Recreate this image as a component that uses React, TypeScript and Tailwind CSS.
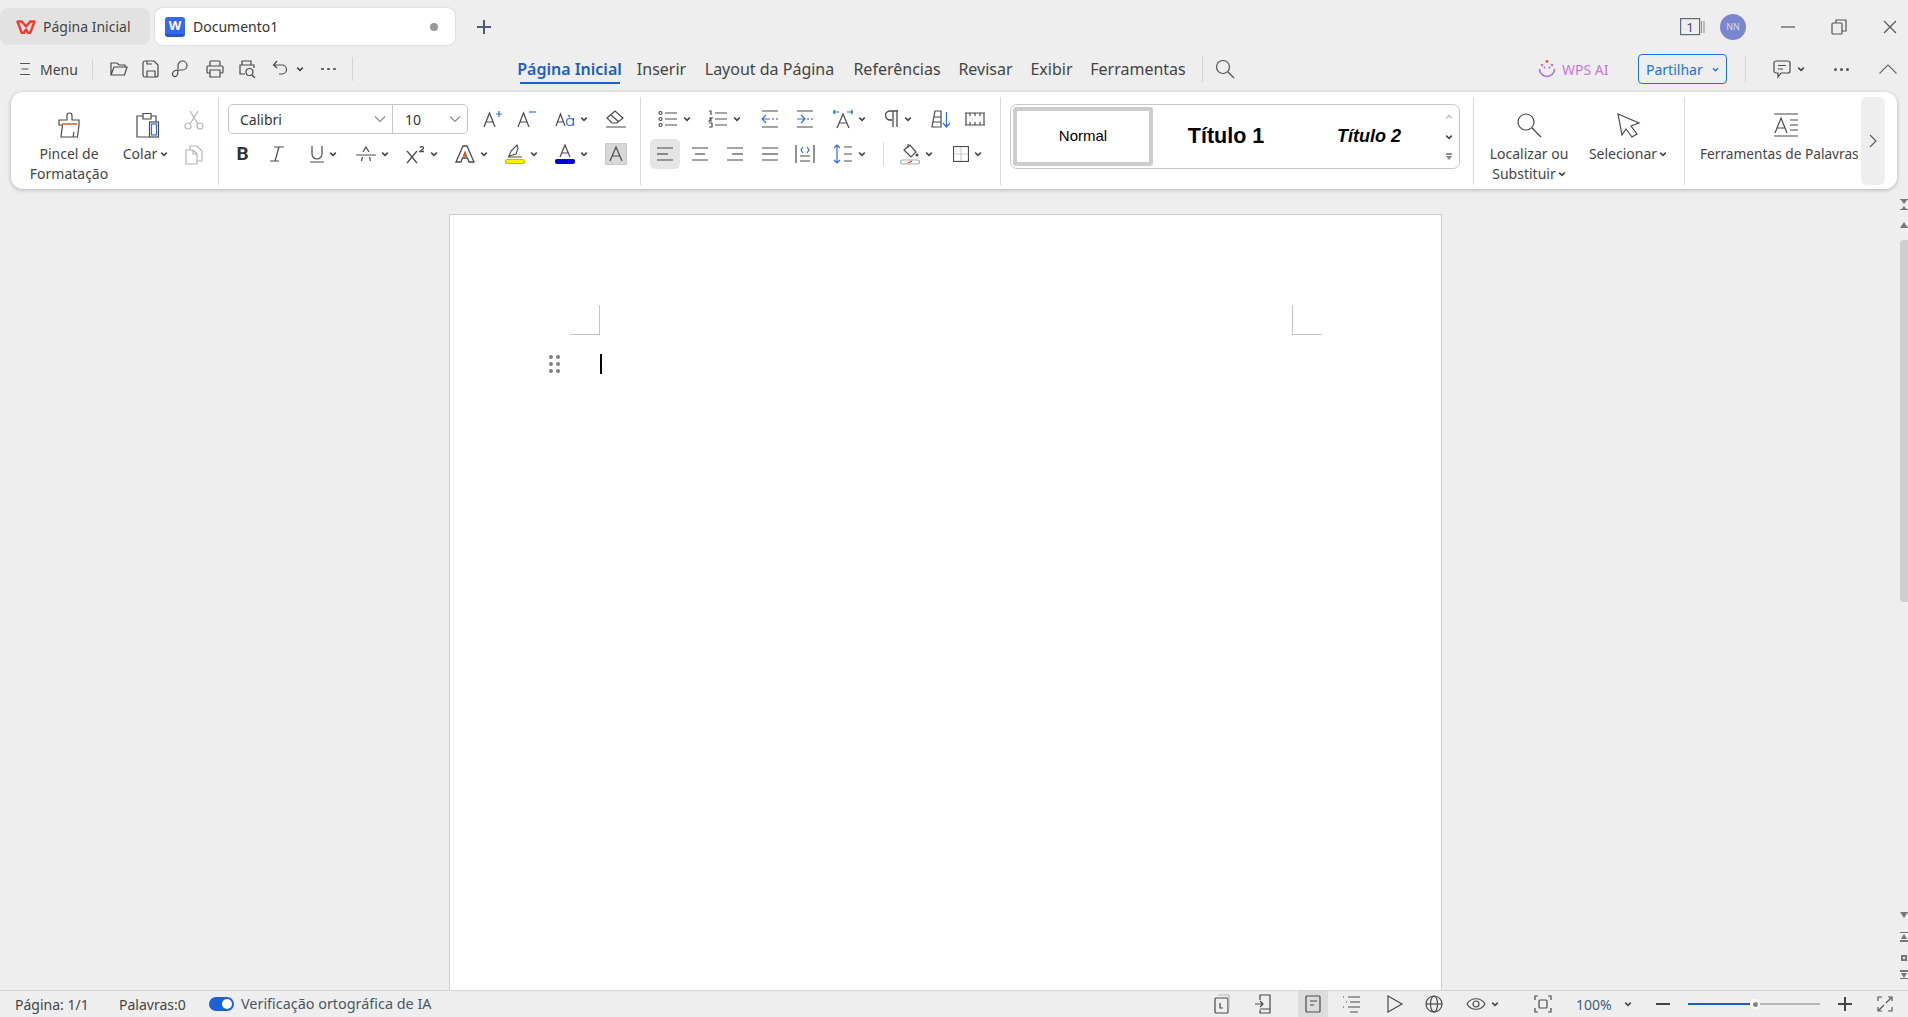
import type { ReactNode } from "react";

const ink = "#4a4a4a";
const blue = "#2f6de8";

function Ico({ size = 20, h, children }: { size?: number; h?: number; children: ReactNode }) {
  return (
    <svg width={size} height={h ?? size} viewBox={`0 0 ${size} ${h ?? size}`} fill="none" stroke={ink} strokeWidth={1.2} className="shrink-0">
      {children}
    </svg>
  );
}

function Chev({ size = 8, color = "#444" }: { size?: number; color?: string }) {
  return (
    <svg width={size} height={size} viewBox="0 0 8 8" fill="none" stroke={color} strokeWidth={1.5} className="shrink-0">
      <path d="M1.2 2.6 4 5.4l2.8-2.8" />
    </svg>
  );
}

function Thin({ className = "" }: { className?: string }) {
  return (
    <svg width="12" height="12" viewBox="0 0 12 12" fill="none" stroke="#8a8a8a" strokeWidth={1.1} className={`shrink-0 ${className}`}>
      <path d="M1 3.5 6 8.5l5-5" />
    </svg>
  );
}

// one slot of a ribbon row, width fixes where the icon lands
function Btn({ w, chev, children }: { w: string; chev?: boolean; children: ReactNode }) {
  return (
    <div className={`flex h-[30px] shrink-0 items-center justify-center gap-[5px] ${w}`}>
      {children}
      {chev && <Chev />}
    </div>
  );
}

const AlignLines = ({ kind }: { kind: "l" | "c" | "r" | "j" }) => {
  const mid = kind === "l" ? "M2 10h11" : kind === "c" ? "M5 10h10" : kind === "r" ? "M7 10h11" : "M2 10h16";
  return (
    <Ico>
      <path d="M2 4h16M2 16h16" />
      <path d={mid} />
    </Ico>
  );
};

function Tabs() {
  return (
    <div className="flex h-[53px] items-start pt-2">
      <div className="flex h-[37px] w-[150px] items-center gap-[7px] rounded-lg bg-[#e2e2e2] pl-4 text-[14px] text-[#444]">
        <svg width="20" height="14" viewBox="0 0 20 14" fill="none" stroke="#f23a2a" strokeWidth={2.4} strokeLinejoin="round">
          <path d="M1.500 1.500h4.300L10 6.500l4.200-5h4.300L14.300 12.800h-2.200L10 9.500l-2.100 3.300H5.700z" />
        </svg>
        Página Inicial
      </div>
      <div className="ml-[5px] flex h-[37px] w-[300px] items-center rounded-lg bg-white pl-[10px] pr-[17px] text-[14px] text-[#333] shadow-[0_0_2px_rgba(0,0,0,0.2)]">
        <div className="flex h-[20px] w-[20px] items-start justify-center overflow-hidden rounded-[3px] border-b-[3px] border-[#2a55c8] bg-[#3468f0] text-[13px] font-bold leading-[17px] text-white">W</div>
        <span className="ml-[8px]">Documento1</span>
        <span className="ml-auto h-2 w-2 rounded-full bg-[#999]" />
      </div>
      <svg width="16" height="16" viewBox="0 0 16 16" stroke="#4a5a78" strokeWidth={2} className="ml-[21px] mt-[11px]">
        <path d="M8 1v14M1 8h14" />
      </svg>
      <div className="ml-auto flex h-[37px] items-center">
        <svg width="25" height="18" viewBox="0 0 25 18" fill="none" stroke="#5a6a80" strokeWidth={1.2}>
          <rect x=".6" y=".6" width="19" height="16" />
          <path d="M21.500 3v12M24 3v12" stroke="#999" />
          <text x="10" y="13.500" fontSize="12" textAnchor="middle" fill="#445" stroke="none" fontFamily="Roboto">1</text>
        </svg>
        <div className="ml-[15px] flex h-[26px] w-[26px] items-center justify-center rounded-full bg-[#7b86d0] text-[9px] text-[#d9dcf2]">NN</div>
        <svg width="14" height="14" viewBox="0 0 14 14" stroke="#555" strokeWidth={1.2} className="ml-[35px]">
          <path d="M0 7h14" />
        </svg>
        <svg width="16" height="16" viewBox="0 0 16 16" fill="none" stroke="#555" strokeWidth={1.2} className="ml-[36px]">
          <rect x="1" y="4" width="10" height="11" rx="1" />
          <path d="M5 4V1h10v11h-4" />
        </svg>
        <svg width="14" height="14" viewBox="0 0 14 14" stroke="#555" strokeWidth={1.2} className="ml-[36px] mr-[11px]">
          <path d="M1 1l12 12M13 1 1 13" />
        </svg>
      </div>
    </div>
  );
}

function NavItem({ w, active, children }: { w: string; active?: boolean; children: ReactNode }) {
  return (
    <div className={`relative flex h-[30px] shrink-0 items-center justify-center whitespace-nowrap ${w} ${active ? "font-semibold text-[#1a5fc4]" : "text-[#444]"}`}>
      {children}
      {active && <span className="absolute bottom-0 left-[3px] right-[2px] h-[2px] bg-[#1a5fc4]" />}
    </div>
  );
}

function Toolbar() {
  return (
    <div className="flex h-[39px] items-center pb-[7px] text-[16px]">
      <svg width="12" height="14" viewBox="0 0 12 14" stroke="#555" strokeWidth={1.2} className="ml-[19px]">
        <path d="M1 1.500h10M2.500 7h7M1 12.500h10" />
      </svg>
      <span className="ml-[9px] w-[37px] whitespace-nowrap text-[14px] text-[#444]">Menu</span>
      <div className="ml-[15px] h-[20px] w-px bg-[#d4d4d4]" />
      <div className="ml-[16px]">
        <Ico>
          <path d="M2 16V4h6l2 2h6v2M2 16l3-8h13l-2.500 8z" />
        </Ico>
      </div>
      <div className="ml-[12px]">
        <Ico>
          <path d="M4 2h9l4 4v10a2 2 0 0 1-2 2H4a2 2 0 0 1-2-2V4a2 2 0 0 1 2-2zM6 18v-6h8v6M6 2v3h5" />
        </Ico>
      </div>
      <div className="ml-[10px]">
        <Ico>
          <path d="M7 10V6.500a4.500 4.500 0 1 1 4.500 4.500H7.500c-4 0-6 2-6 4.200S4.500 18.500 6 16.500c.8-1 1-3 1-5.500" />
        </Ico>
      </div>
      <div className="ml-[14px]">
        <Ico>
          <path d="M5 7V3a1 1 0 0 1 1-1h8a1 1 0 0 1 1 1v4M5 14H3a1 1 0 0 1-1-1V8a1 1 0 0 1 1-1h14a1 1 0 0 1 1 1v5a1 1 0 0 1-1 1h-2M5 11h10v7H5z" />
        </Ico>
      </div>
      <div className="ml-[12px]">
        <Ico>
          <path d="M5 6V2h9v4M8 15H3V6h14v3" />
          <circle cx="12.500" cy="13" r="3.500" />
          <path d="m15 16 3 3" />
        </Ico>
      </div>
      <div className="ml-[14px]">
        <Ico>
          <path d="M6 2 2.500 6 6 9M3 6h8a4.500 4.500 0 0 1 0 9H8" />
        </Ico>
      </div>
      <div className="ml-[5px]">
        <Chev />
      </div>
      <div className="ml-[17px] flex gap-[3px]">
        <span className="h-[2px] w-[3px] rounded-full bg-[#555]" />
        <span className="h-[2px] w-[3px] rounded-full bg-[#555]" />
        <span className="h-[2px] w-[3px] rounded-full bg-[#555]" />
      </div>
      <div className="ml-[16px] h-[24px] w-px bg-[#d4d4d4]" />
      <div className="ml-[164px] flex items-center">
        <NavItem w="w-[105px]" active>Página Inicial</NavItem>
        <div className="ml-[16px] flex items-center gap-[19px]">
          <NavItem w="w-[47px]">Inserir</NavItem>
          <NavItem w="w-[131px]">Layout da Página</NavItem>
          <NavItem w="w-[86px]">Referências</NavItem>
          <NavItem w="w-[53px]">Revisar</NavItem>
          <NavItem w="w-[41px]">Exibir</NavItem>
          <NavItem w="w-[94px]">Ferramentas</NavItem>
        </div>
      </div>
      <div className="ml-[17px] h-[26px] w-px bg-[#d4d4d4]" />
      <svg width="20" height="20" viewBox="0 0 20 20" fill="none" stroke="#555" strokeWidth={1.2} className="ml-[12px]">
        <circle cx="8" cy="8" r="6.500" />
        <path d="m13 13 6 6" />
      </svg>
      <div className="ml-auto flex items-center">
        <svg width="18" height="20" viewBox="0 0 18 20" fill="none" strokeWidth={1.6}>
          <circle cx="9" cy="2.500" r="1.400" fill="#e2574c" stroke="none" />
          <circle cx="4" cy="6" r="1.300" fill="#d86bc4" stroke="none" />
          <circle cx="14" cy="6" r="1.300" fill="#d86bc4" stroke="none" />
          <circle cx="6.500" cy="8.500" r="1" fill="#b06be0" stroke="none" />
          <circle cx="11.500" cy="8.500" r="1" fill="#b06be0" stroke="none" />
          <path d="M1.500 10a7.500 7.500 0 0 0 15 0" stroke="#a66be0" />
        </svg>
        <span className="ml-[6px] w-[48px] whitespace-nowrap text-[14px] text-[#c678d8]">WPS AI</span>
        <div className="ml-[28px] flex h-[30px] w-[89px] items-center rounded-[4px] border border-[#1a6fe8] pl-[7px] text-[14px] text-[#1a6fe8]">
          Partilhar
          <span className="ml-auto mr-[7px]">
            <Chev size={7} color="#1a6fe8" />
          </span>
        </div>
        <div className="ml-[18px] h-[26px] w-px bg-[#d4d4d4]" />
        <div className="ml-[26px]">
          <Ico>
            <path d="M4 2h12a2 2 0 0 1 2 2v8a2 2 0 0 1-2 2H9l-3 4v-4H4a2 2 0 0 1-2-2V4a2 2 0 0 1 2-2zM6 6.500h8M6 10h5" />
          </Ico>
        </div>
        <div className="ml-[5px]">
          <Chev />
        </div>
        <div className="ml-[29px] flex gap-[3px]">
          <span className="h-[3px] w-[3px] rounded-full bg-[#555]" />
          <span className="h-[3px] w-[3px] rounded-full bg-[#555]" />
          <span className="h-[3px] w-[3px] rounded-full bg-[#555]" />
        </div>
        <svg width="18" height="10" viewBox="0 0 18 10" fill="none" stroke="#666" strokeWidth={1.1} className="ml-[30px] mr-[11px]">
          <path d="m.5 9.500 8.500-8.500 8.500 8.500" />
        </svg>
      </div>
    </div>
  );
}

function Divider() {
  return <div className="h-[88px] w-px shrink-0 bg-[#d9d9d9]" />;
}

function GroupClipboard() {
  return (
    <div className="flex w-[207px] shrink-0 text-[14px] leading-[20px] text-[#444]">
      <div className="ml-[14px] flex w-[88px] flex-col items-center pt-[14px]">
        <svg width="26" height="28" viewBox="0 0 26 28" fill="none" stroke={ink} strokeWidth={1.2}>
          <path d="M11 9V4.500a2.500 2.500 0 0 1 5 0V9h7v5l-1.500 12H5l1.500-12H3V9z" />
          <path d="M6 13h15" stroke="#d2551f" strokeWidth={1.4} />
          <path d="m17 26 1-5" />
        </svg>
        <span className="mt-[5px] whitespace-nowrap">Pincel de</span>
        <span className="whitespace-nowrap">Formatação</span>
      </div>
      <div className="ml-[1px] flex w-[68px] flex-col items-center pt-[14px]">
        <svg width="26" height="28" viewBox="0 0 26 28" fill="none" stroke={ink} strokeWidth={1.2}>
          <path d="M8 5H2v21h12M8 5V2.500h8V5M8 5v3h8V5M16 5h5v6" />
          <rect x="14.500" y="11" width="9" height="15" stroke={ink} />
          <rect x="16.500" y="13" width="5" height="11" stroke={blue} />
        </svg>
        <span className="mt-[5px] flex items-center gap-[3px] pr-[5px]">
          Colar
          <Chev />
        </span>
      </div>
      <div className="ml-[2px] flex flex-col items-center gap-[15px] pt-[13px]">
        <svg width="20" height="20" viewBox="0 0 20 20" fill="none" stroke="#b5b5b5" strokeWidth={1.2}>
          <circle cx="4" cy="16" r="3" />
          <circle cx="16" cy="16" r="3" />
          <path d="M6 14 14 1M14 14 6 1" />
        </svg>
        <svg width="20" height="20" viewBox="0 0 20 20" fill="none" stroke="#b5b5b5" strokeWidth={1.2}>
          <path d="M6 5V1h7l5 5v10h-5M2 5h7l4 4v10H2zM9 5v4h4" />
        </svg>
      </div>
    </div>
  );
}

function GroupFont() {
  return (
    <div className="flex w-[421px] shrink-0 flex-col gap-[5px] pl-[9px] pt-[7px]">
      <div className="flex items-center">
        <div className="flex h-[30px] w-[240px] rounded-[5px] border border-[#c8c8c8] text-[14px] text-[#333]">
          <div className="flex w-[164px] items-center border-r border-[#c8c8c8] pl-[11px] pr-[6px]">
            Calibri
            <Thin className="ml-auto" />
          </div>
          <div className="flex flex-1 items-center pl-[12px] pr-[6px]">
            10
            <Thin className="ml-auto" />
          </div>
        </div>
        <div className="ml-[7px] flex items-center">
          <Btn w="w-[35px]">
            <svg width="20" height="20" viewBox="0 0 20 20" fill="none" stroke={ink} strokeWidth={1.2}>
              <path d="m1 18 5.500-14L12 18M3 13h7" />
              <path d="M13 5h6M16 2v6" stroke={blue} />
            </svg>
          </Btn>
          <Btn w="w-[34px]">
            <svg width="20" height="20" viewBox="0 0 20 20" fill="none" stroke={ink} strokeWidth={1.2}>
              <path d="m1 18 5.500-14L12 18M3 13h7" />
              <path d="M12 3h7" stroke={blue} />
            </svg>
          </Btn>
          <Btn w="w-[54px]" chev>
            <svg width="20" height="20" viewBox="0 0 20 20" fill="none" stroke={ink} strokeWidth={1.2}>
              <path d="m1 17 4.500-12L10 17M2.500 13h6" />
              <circle cx="15" cy="13" r="3.500" stroke={blue} />
              <path d="M18.500 9v8M13 6l2 2" stroke={blue} />
            </svg>
          </Btn>
          <Btn w="w-[36px]">
            <svg width="20" height="20" viewBox="0 0 20 20" fill="none" stroke={ink} strokeWidth={1.2}>
              <path d="m1 9 8-7 8 7-6 5H6zM5 6l8 7M0 18h20" />
            </svg>
          </Btn>
        </div>
      </div>
      <div className="flex items-center">
        <Btn w="w-[29px]">
          <span className="font-['Roboto',sans-serif] text-[19px] font-bold text-[#333]">B</span>
        </Btn>
        <Btn w="w-[40px]">
          <svg width="16" height="16" viewBox="0 0 16 16" fill="none" stroke={ink} strokeWidth={1.2}>
            <path d="M5 1h10M10 1 6 15M1 15h9" />
          </svg>
        </Btn>
        <Btn w="w-[52px]" chev>
          <svg width="14" height="18" viewBox="0 0 14 18" fill="none" stroke={ink} strokeWidth={1.2}>
            <path d="M2 1v8a5 5 0 0 0 10 0V1M0 17h14" />
          </svg>
        </Btn>
        <Btn w="w-[46px]" chev>
          <svg width="20" height="18" viewBox="0 0 20 18" fill="none" stroke={ink} strokeWidth={1.2}>
            <path d="m5.500 16 1-4M14.500 16l-1-4M7 7l3-5 3 5M0 10h20" />
          </svg>
        </Btn>
        <Btn w="w-[54px]" chev>
          <svg width="19" height="19" viewBox="0 0 19 19" fill="none" stroke={ink} strokeWidth={1.2}>
            <path d="m1 6 10 12M11 6 1 18" />
            <path d="M14 2.500c1-1.500 3.500-1 3.500.5s-2.500 2-3.500 3.500h4" strokeWidth={1.4} />
          </svg>
        </Btn>
        <Btn w="w-[44px]" chev>
          <svg width="20" height="20" viewBox="0 0 20 20" fill="none" stroke={ink} strokeWidth={1.3}>
            <path d="M1 18 8 2h4l7 16h-5l-1.500-4h-5L6 18z" />
            <path d="M8.500 12h3L10 8z" fill="#d2551f" stroke="#d2551f" />
          </svg>
        </Btn>
        <Btn w="w-[56px]" chev>
          <svg width="20" height="20" viewBox="0 0 20 20" fill="none" stroke={ink} strokeWidth={1.1}>
            <path d="m4 12 2-5 6-6 1 3-2 6zM3 13h14" />
            <rect x=".5" y="15.500" width="19" height="4" rx="2" fill="#fff200" stroke="#c9b800" />
          </svg>
        </Btn>
        <Btn w="w-[44px]" chev>
          <svg width="20" height="20" viewBox="0 0 20 20" fill="none" stroke={ink} strokeWidth={1.2}>
            <path d="m5 13 5-12 5 12M6.500 9h7" />
            <rect x="0" y="15" width="20" height="5" rx="2" fill="#0000d8" stroke="none" />
          </svg>
        </Btn>
        <div className="ml-[13px] flex h-[20px] w-[20px] items-center justify-center bg-[#d8d8d8] shadow-[0_0_0_1px_#ccc]">
          <svg width="14" height="16" viewBox="0 0 14 16" fill="none" stroke={ink} strokeWidth={1.2}>
            <path d="m1 15 6-14 6 14M3 10h8" />
          </svg>
        </div>
      </div>
    </div>
  );
}

function GroupParagraph() {
  return (
    <div className="flex w-[359px] shrink-0 flex-col gap-[5px] pl-[9px] pt-[7px]">
      <div className="flex items-center">
        <Btn w="w-[48px]" chev>
          <svg width="20" height="18" viewBox="0 0 20 18" fill="none" stroke={ink} strokeWidth={1.2}>
            <circle cx="2.500" cy="3" r="1.500" />
            <circle cx="2.500" cy="9" r="1.500" />
            <circle cx="2.500" cy="15" r="1.500" />
            <path d="M7 3h12M7 9h12M7 15h12" />
          </svg>
        </Btn>
        <Btn w="w-[52px]" chev>
          <svg width="20" height="18" viewBox="0 0 20 18" fill="none" stroke={ink} strokeWidth={1.2}>
            <path d="M1 1h2v4M1 8h3l-3 3h3M1 13h3v4H1M7 3h12M7 9h12M7 15h12" />
          </svg>
        </Btn>
        <Btn w="w-[40px]">
          <svg width="18" height="18" viewBox="0 0 18 18" fill="none" stroke={ink} strokeWidth={1.2}>
            <path d="M1 1h16M1 17h16" />
            <path d="M5 5 1 9l4 4M1 9h8" stroke={blue} />
            <path d="M11 9h2M15 9h2" />
          </svg>
        </Btn>
        <Btn w="w-[30px]">
          <svg width="18" height="18" viewBox="0 0 18 18" fill="none" stroke={ink} strokeWidth={1.2}>
            <path d="M1 1h16M1 17h16" />
            <path d="m5 5 4 4-4 4M1 9h8" stroke={blue} />
            <path d="M11 9h2M15 9h2" />
          </svg>
        </Btn>
        <Btn w="w-[58px]" chev>
          <svg width="20" height="20" viewBox="0 0 20 20" fill="none" stroke={ink} strokeWidth={1.2}>
            <path d="m4 19 6-14 6 14M6 14h8" />
            <path d="M0 3h6M2 1 0 3l2 2M14 3h6M18 1l2 2-2 2" stroke={blue} />
          </svg>
        </Btn>
        <Btn w="w-[40px]" chev>
          <svg width="14" height="18" viewBox="0 0 14 18" fill="none" stroke={ink} strokeWidth={1.3}>
            <path d="M7 10H5A4.500 4.500 0 0 1 5 1h8M8 1v16M12 1v16" />
          </svg>
        </Btn>
        <Btn w="w-[46px]">
          <svg width="20" height="20" viewBox="0 0 20 20" fill="none" stroke={ink} strokeWidth={1.2}>
            <path d="M4 2h6v16H1zM3 8h7M2 13h8" />
            <path d="M15.500 3v15M12 14l3.500 4 3.500-4" stroke={blue} />
          </svg>
        </Btn>
        <Btn w="w-[22px]">
          <svg width="20" height="14" viewBox="0 0 20 14" fill="none" stroke={ink} strokeWidth={1.2}>
            <path d="M0 1h20M0 13h20M1 1v12M19 1v12M5 1v3M10 1v3M15 1v3M5 13v-3M10 13v-3M15 13v-3" />
          </svg>
        </Btn>
      </div>
      <div className="flex items-center">
        <Btn w="w-[30px] rounded-[5px] bg-[#e5e5e5]">
          <AlignLines kind="l" />
        </Btn>
        <Btn w="w-[39px]">
          <AlignLines kind="c" />
        </Btn>
        <Btn w="w-[31px]">
          <AlignLines kind="r" />
        </Btn>
        <Btn w="w-[39px]">
          <AlignLines kind="j" />
        </Btn>
        <Btn w="w-[32px]">
          <svg width="20" height="18" viewBox="0 0 20 18" fill="none" stroke={ink} strokeWidth={1.2}>
            <path d="M1 0v18M19 0v18M5 11h10M5 16h10" />
            <path d="M8 2 6 5l2 3M12 2l2 3-2 3" stroke={blue} />
          </svg>
        </Btn>
        <Btn w="w-[56px]" chev>
          <svg width="20" height="20" viewBox="0 0 20 20" fill="none" stroke={ink} strokeWidth={1.2}>
            <path d="M11 3h8M11 10h8M11 17h8" />
            <path d="M4 1v18M1 4l3-3 3 3M1 16l3 3 3-3" stroke={blue} />
          </svg>
        </Btn>
        <div className="ml-[6px] h-[24px] w-px shrink-0 bg-[#d9d9d9]" />
        <Btn w="w-[64px]" chev>
          <svg width="20" height="22" viewBox="0 0 20 22" fill="none" stroke={ink} strokeWidth={1.2}>
            <path d="m4 7 6-5 6 7-5 5zM8 1v4" />
            <circle cx="17" cy="12" r="1" fill={ink} />
            <rect x=".5" y="17" width="19" height="4" rx="2" stroke="#aaa" />
            <path d="m8 20 4-2" stroke="#e0352b" />
          </svg>
        </Btn>
        <Btn w="w-[38px]" chev>
          <svg width="16" height="16" viewBox="0 0 16 16" fill="none" stroke={ink} strokeWidth={1.2}>
            <rect x=".5" y=".5" width="15" height="15" />
            <path d="M8 1v14M1 8h14" stroke="#ccc" />
          </svg>
        </Btn>
      </div>
    </div>
  );
}

function StyleBox() {
  return (
    <div className="flex w-[472px] shrink-0 pl-[9px] pt-[7px]">
      <div className="relative flex h-[65px] w-[450px] items-center rounded-[7px] border border-[#c8c8c8] pl-[2px] font-['Liberation_Sans',sans-serif] text-black">
        <div className="flex h-[59px] w-[140px] items-center justify-center rounded-[3px] border-[4px] border-[#cccccc] text-[15px]">Normal</div>
        <div className="flex w-[146px] justify-center text-[21.500px] font-bold">Título 1</div>
        <div className="flex w-[140px] justify-center text-[18px] font-bold italic">Título 2</div>
        <div className="ml-auto mr-[6px] flex flex-col items-center gap-[12px]">
          <svg width="8" height="8" viewBox="0 0 8 8" fill="none" stroke="#bbb" strokeWidth={1.3}>
            <path d="M1 5.500 4 2.500l3 3" />
          </svg>
          <Chev />
          <svg width="8" height="8" viewBox="0 0 8 8" fill="none" stroke="#555" strokeWidth={1.3}>
            <path d="M1 1h6" />
            <path d="M1 3h6L4 7z" fill="#888" stroke="none" />
          </svg>
        </div>
      </div>
    </div>
  );
}

function GroupFind() {
  return (
    <div className="flex w-[210px] shrink-0 text-[14px] leading-[20px] text-[#444]">
      <div className="ml-[15px] flex w-[80px] flex-col items-center pt-[14px]">
        <svg width="26" height="28" viewBox="0 0 26 28" fill="none" stroke={ink} strokeWidth={1.2}>
          <circle cx="10" cy="11" r="8" />
          <path d="m16 17 9 9" />
        </svg>
        <span className="mt-[5px] whitespace-nowrap">Localizar ou</span>
        <span className="flex items-center gap-[2px] whitespace-nowrap">
          Substituir
          <Chev />
        </span>
      </div>
      <div className="ml-[19px] flex w-[80px] flex-col items-center pt-[14px]">
        <svg width="26" height="28" viewBox="0 0 26 28" fill="none" stroke={ink} strokeWidth={1.2}>
          <path d="m3 3 21 9-8 3 6 8-5 3-6-8-4 6z" />
        </svg>
        <span className="mt-[5px] flex items-center gap-[2px] whitespace-nowrap">
          Selecionar
          <Chev />
        </span>
      </div>
    </div>
  );
}

function Ribbon() {
  return (
    <div className="mx-[11px] flex h-[97px] items-start rounded-xl bg-white pt-[5px] text-[#444] shadow-[0_1px_4px_rgba(0,0,0,0.25)]">
      <GroupClipboard />
      <Divider />
      <GroupFont />
      <Divider />
      <GroupParagraph />
      <Divider />
      <StyleBox />
      <Divider />
      <GroupFind />
      <Divider />
      <div className="flex h-[88px] w-[176px] shrink-0 flex-col items-start pt-[14px] text-[13.700px] leading-[20px]">
        <svg width="26" height="28" viewBox="0 0 26 28" fill="none" stroke={ink} strokeWidth={1.2} className="ml-[88px]">
          <path d="M1 3h24M1 25h24M2 22 8 7l6 15M4 17h8M17 9h8M17 14h8M17 19h8" />
        </svg>
        <span className="ml-[15px] mt-[5px] whitespace-nowrap">Ferramentas de Palavras</span>
      </div>
      <div className="flex h-[88px] w-[24px] shrink-0 items-center justify-center rounded-md bg-[#eeeeee]">
        <svg width="8" height="14" viewBox="0 0 8 14" fill="none" stroke="#555" strokeWidth={1.1}>
          <path d="m1 1 6 6-6 6" />
        </svg>
      </div>
    </div>
  );
}

function Page() {
  return (
    <div className="ml-[449px] h-full w-[993px] overflow-hidden border-x border-t border-[#cccccc] bg-white pl-[120px] pr-[119px] pt-[90px]">
      <div className="flex justify-between">
        <div className="h-[30px] w-[30px] border-b border-r border-[#c4c4c4]" />
        <div className="h-[30px] w-[30px] border-b border-l border-[#c4c4c4]" />
      </div>
      <div className="mt-[19px] flex items-start">
        <div className="ml-[-21px] mt-[1px] grid w-[11px] grid-cols-2 gap-x-[3px] gap-y-[3px]">
          {[0, 1, 2, 3, 4, 5].map((i) => (
            <span key={i} className="h-[4px] w-[4px] rounded-full bg-[#808080]" />
          ))}
        </div>
        <div className="ml-[40px] h-[20px] w-[2px] bg-black" />
      </div>
    </div>
  );
}

function ScrollRail() {
  return (
    <div className="absolute bottom-0 right-0 top-0 flex w-[8px] flex-col items-center overflow-hidden">
      <svg width="8" height="29" viewBox="0 0 8 29" fill="#777" className="mt-[10px] shrink-0">
        <path d="M0 0h8v1H0zM1 1h6L4 5zM1 11l3-4 3 4zM0 10h8v1H0zM0 29l4-6 4 6z" />
      </svg>
      <div className="mt-[12px] h-[362px] w-full shrink-0 rounded-l bg-[#cfcfcf]" />
      <svg width="8" height="68" viewBox="0 0 8 68" fill="#777" className="mb-[10px] mt-auto shrink-0">
        <path d="M0 0h8L4 6zM0 20h8v1H0zM1 27l3-5 3 5zM0 28h8v2H0zM1 43h6v6H1zM3 45v2h2v-2zM0 58h8v2H0zM1 61h6l-3 5zM0 66h8v1H0z" fillRule="evenodd" />
      </svg>
    </div>
  );
}

function StatusBar() {
  return (
    <div className="flex h-[27px] items-center border-t border-[#d5d5d5] text-[14px] text-[#444]">
      <span className="ml-[15px] w-[72px] whitespace-nowrap">Página: 1/1</span>
      <span className="ml-[32px] w-[64px] whitespace-nowrap">Palavras:0</span>
      <div className="ml-[26px] flex h-[14px] w-[25px] items-center justify-end rounded-full bg-[#1a62d6] pr-[2px]">
        <span className="h-[10px] w-[10px] rounded-full bg-white" />
      </div>
      <span className="ml-[7px] whitespace-nowrap text-[14.400px] text-[#4a5568]">Verificação ortográfica de IA</span>
      <div className="ml-auto flex h-full items-center">
        <Ico>
          <rect x="3" y="4" width="13" height="15" rx="1" />
          <path d="M6 1h11v14" stroke="#bbb" />
          <path d="M8 9v5h3" />
        </Ico>
        <div className="ml-[22px]">
          <Ico>
            <path d="M6 6V1h10v18H6v-3M6 15h10M1 10h8M6 7l3 3-3 3" />
          </Ico>
        </div>
        <div className="ml-[24px] flex h-full w-[30px] items-center justify-center bg-[#dcdcdc]">
          <Ico>
            <rect x="3" y="2" width="14" height="16" rx="1" />
            <path d="M7 7h7M7 11h4" />
          </Ico>
        </div>
        <div className="ml-[14px]">
          <Ico>
            <path d="M1 3h1M6 3h12M4 8h1M8 8h10M1 13h1M6 13h12M8 18h8" />
          </Ico>
        </div>
        <div className="ml-[23px]">
          <Ico>
            <path d="M3 2 17 10 3 18z" />
          </Ico>
        </div>
        <div className="ml-[19px]">
          <Ico>
            <circle cx="10" cy="10" r="8" />
            <ellipse cx="10" cy="10" rx="3.500" ry="8" />
            <path d="M2 10h16" />
          </Ico>
        </div>
        <div className="ml-[22px]">
          <Ico>
            <path d="M1 10c4-7 14-7 18 0-4 7-14 7-18 0z" />
            <circle cx="10" cy="10" r="3" />
          </Ico>
        </div>
        <div className="ml-[5px]">
          <Chev />
        </div>
        <div className="ml-[34px]">
          <Ico>
            <path d="M5 2H2v4M15 2h3v4M5 18H2v-4M15 18h3v-4" />
            <rect x="6" y="6" width="8" height="8" rx="1" />
          </Ico>
        </div>
        <span className="ml-[23px] w-[35px] text-[#4a5a78]">100%</span>
        <div className="ml-[13px]">
          <Chev />
        </div>
        <div className="ml-[24px] h-[2px] w-[14px] bg-[#444]" />
        <div className="ml-[18px] flex h-[2px] w-[132px] items-center bg-[#b5b5b5]">
          <div className="h-full w-[63px] bg-[#1a5fc4]" />
          <div className="-ml-px flex h-[10px] w-[10px] items-center justify-center rounded-full bg-white">
            <span className="h-[5px] w-[5px] rounded-full bg-[#888]" />
          </div>
        </div>
        <svg width="14" height="14" viewBox="0 0 14 14" stroke="#444" strokeWidth={2} className="ml-[18px]">
          <path d="M7 0v14M0 7h14" />
        </svg>
        <svg width="16" height="16" viewBox="0 0 16 16" fill="none" stroke="#555" strokeWidth={1.2} className="ml-[25px] mr-[15px]">
          <path d="M5 1H1v4M11 1h4v4M5 15H1v-4M11 15h4v-4M9 7l5-5M7 9l-5 5" />
        </svg>
      </div>
    </div>
  );
}

export default function App() {
  return (
    <div className="flex h-[1017px] w-[1908px] flex-col overflow-hidden bg-[#eeeeee] font-['Noto_Sans',sans-serif]">
      <Tabs />
      <Toolbar />
      <Ribbon />
      <div className="relative min-h-0 flex-1 pt-[25px]">
        <Page />
        <ScrollRail />
      </div>
      <StatusBar />
    </div>
  );
}
